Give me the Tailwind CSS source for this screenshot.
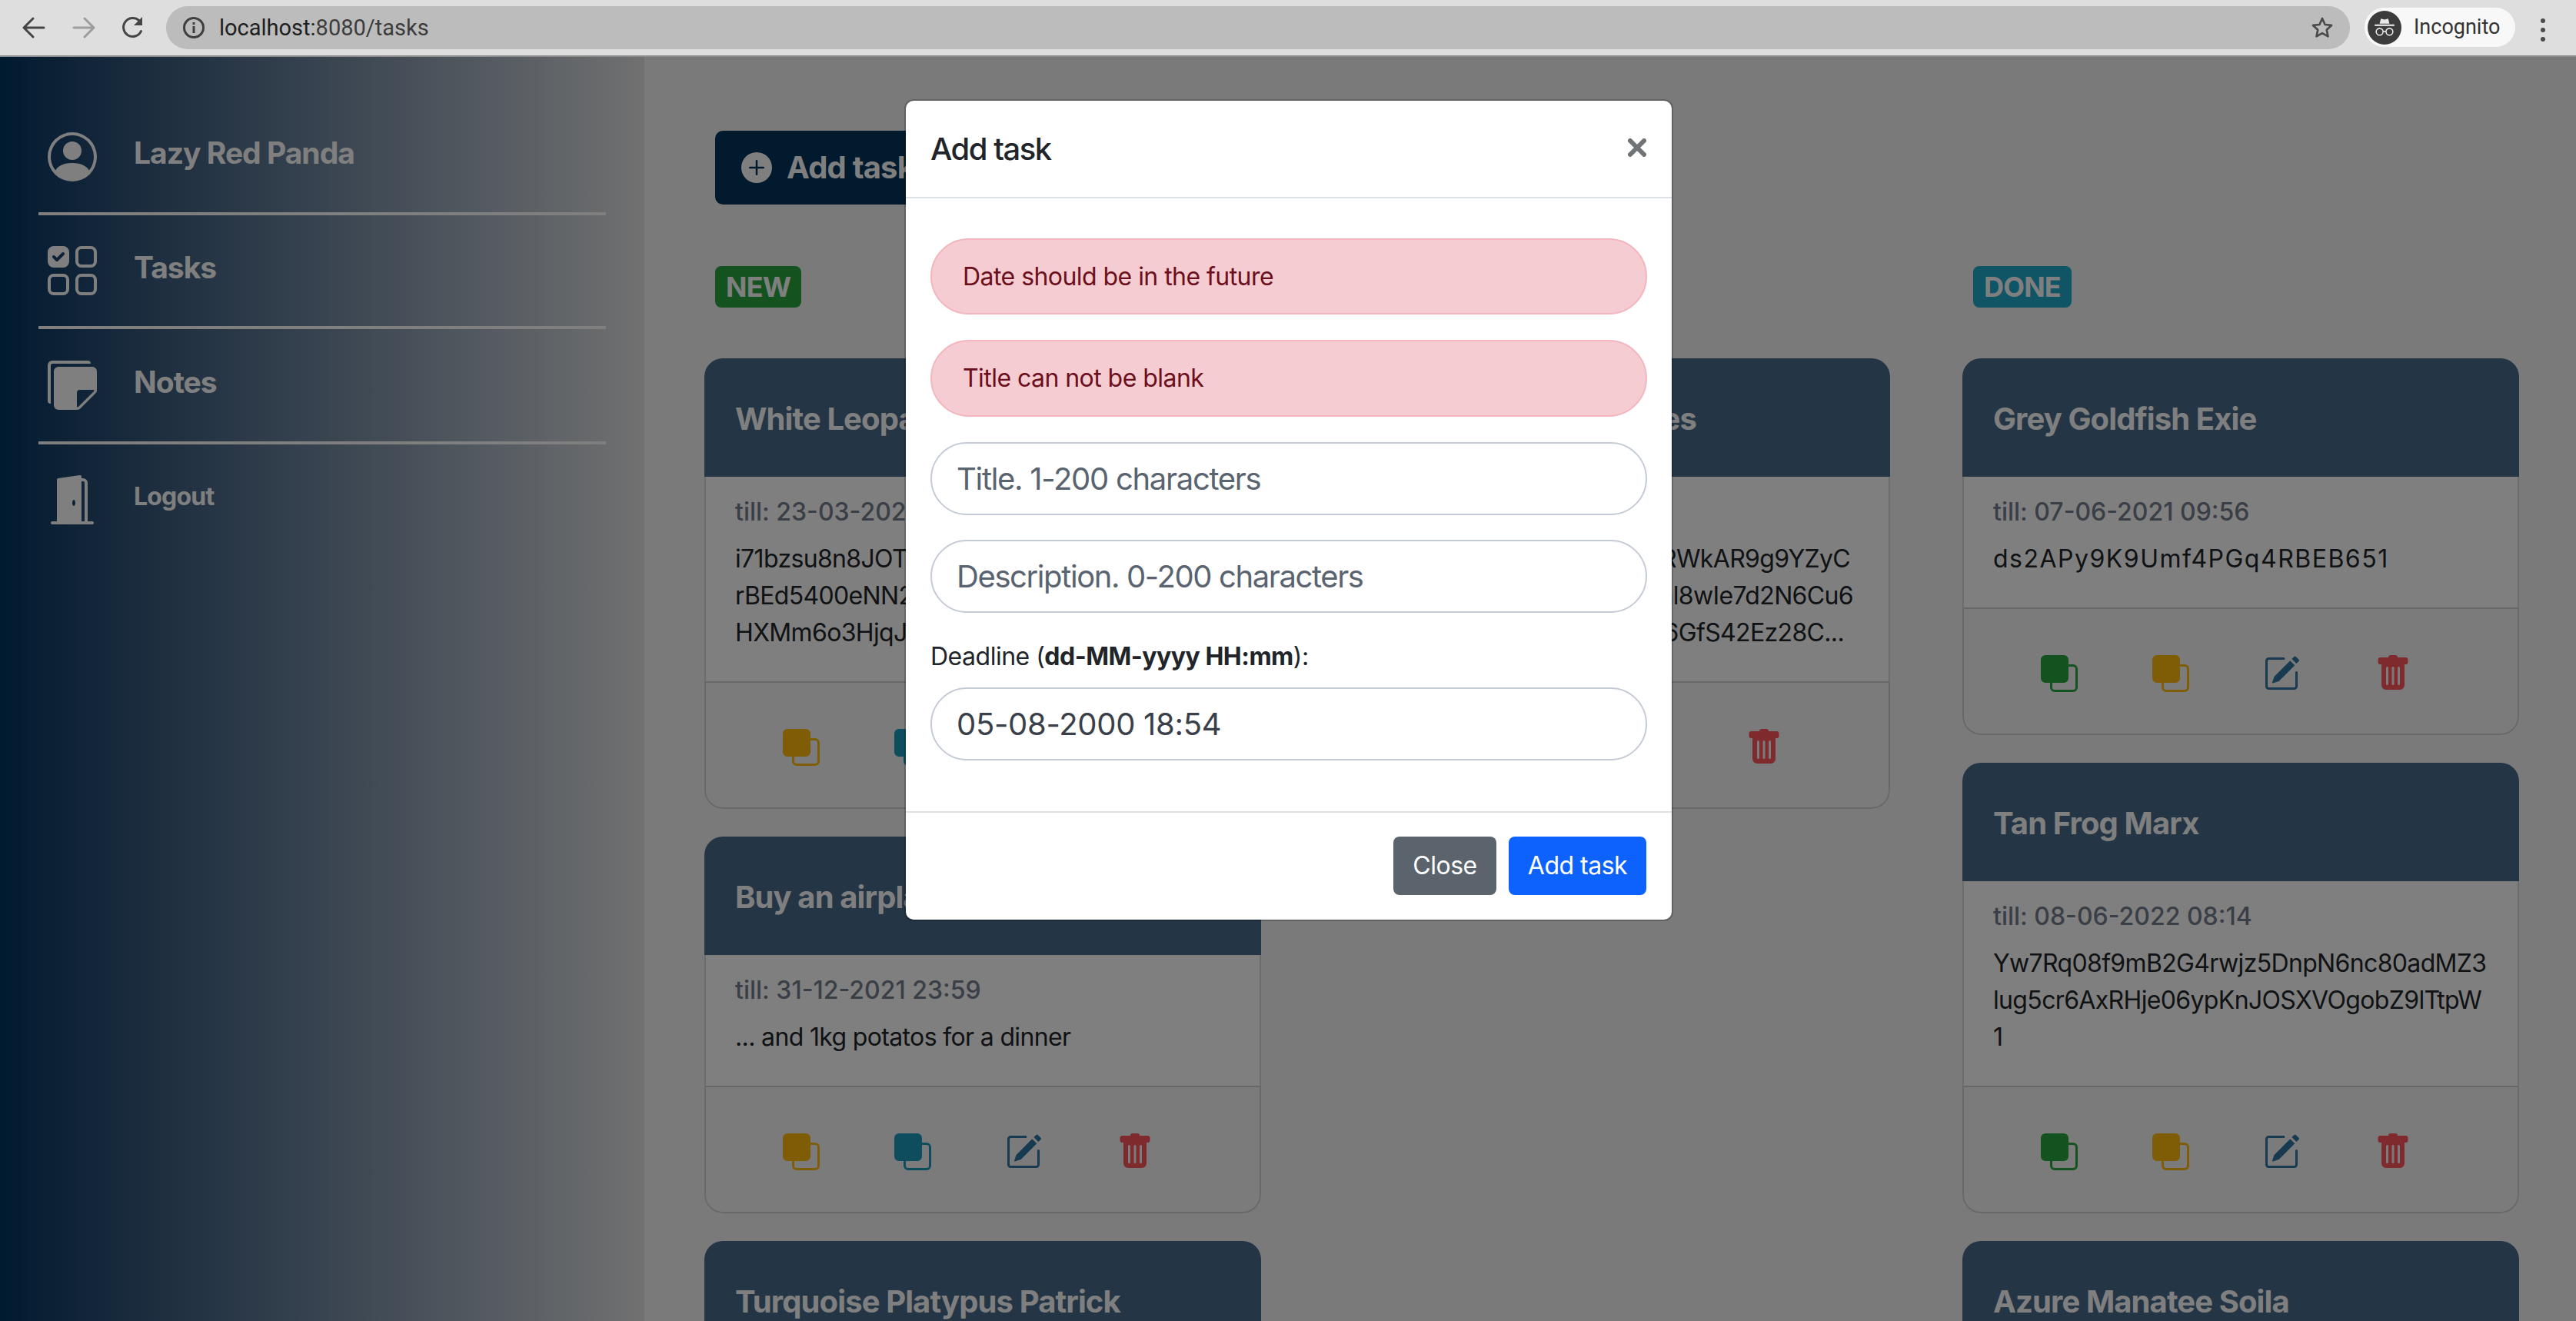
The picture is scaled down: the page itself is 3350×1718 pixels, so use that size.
<!DOCTYPE html>
<html lang="en">
<head>
    <meta charset="UTF-8">
    <title>localhost:8080/tasks</title>
    <script src="https://cdn.jsdelivr.net/npm/@tailwindcss/browser@4"></script>
</head>
<body class="w-[3350px] h-[1718px] overflow-hidden bg-[#f4f4f4] font-['Inter',sans-serif]">
    <!-- browser toolbar -->
    <div class="h-[74px] bg-[#dedede] border-b-2 border-[#8c8c8c] flex items-start font-['Roboto',sans-serif]">
        <div class="w-[216px] h-[72px] flex items-center shrink-0">
            <svg class="ml-[28px] w-[32px] h-[32px] text-[#454545]" viewBox="0 0 32 32" fill="none" stroke="currentColor" stroke-width="3" stroke-linecap="round" stroke-linejoin="round"><path d="M29 16H4M15 4L3 16l12 12"/></svg>
            <svg class="ml-[33px] w-[32px] h-[32px] text-[#9d9d9d]" viewBox="0 0 32 32" fill="none" stroke="currentColor" stroke-width="3" stroke-linecap="round" stroke-linejoin="round"><path d="M3 16h25M17 4l12 12-12 12"/></svg>
            <svg class="ml-[32px] w-[32px] h-[32px] text-[#454545]" viewBox="0 0 32 32" fill="none"><path d="M26.5 20.5A12 12 0 1 1 24.5 7.5" stroke="currentColor" stroke-width="3" stroke-linecap="round"/><path d="M28 2v11H17z" fill="currentColor"/></svg>
        </div>
        <div class="mt-[8px] w-[2840px] h-[56px] rounded-full bg-[#bcbcbc] flex items-center">
            <svg class="ml-[22px] w-[28px] h-[28px] text-[#3f3f3f]" viewBox="0 0 28 28" fill="none"><circle cx="14" cy="14" r="12.5" stroke="currentColor" stroke-width="3"/><rect x="12.5" y="12" width="3" height="9" fill="currentColor"/><rect x="12.5" y="7" width="3" height="3" fill="currentColor"/></svg>
            <span class="ml-[19px] text-[29px] leading-none text-[#202020]">localhost:<span class="text-[#3c3c3c]">8080/tasks</span></span>
            <svg class="ml-auto mr-[20px] w-[32px] h-[32px] text-[#4a4a4a]" viewBox="0 0 24 24" fill="none" stroke="currentColor" stroke-width="2" stroke-linejoin="round"><path d="M12 3l2.7 6 6.3.7-4.7 4.4 1.3 6.4L12 17.3l-5.6 3.2 1.3-6.4L3 9.7 9.3 9z"/></svg>
        </div>
        <div class="ml-[19px] mt-[10px] w-[196px] h-[51px] rounded-full bg-[#f8f8f8] flex items-center">
            <div class="ml-[4px] w-[44px] h-[44px] rounded-full bg-[#3c3c3c] flex items-center justify-center">
                <svg class="w-[34px] h-[34px]" viewBox="0 0 32 32" fill="none"><path d="M10 11l1.5-6 4.5 1.2L20.500 5l1.500 6z" fill="#e8e8e8"/><rect x="4" y="12" width="24" height="2" fill="#e8e8e8"/><circle cx="10" cy="21" r="4.200" stroke="#e8e8e8" stroke-width="1.500"/><circle cx="22" cy="21" r="4.200" stroke="#e8e8e8" stroke-width="1.500"/><path d="M14.200 20.500h3.600" stroke="#e8e8e8" stroke-width="1.500"/></svg>
            </div>
            <span class="ml-[16px] text-[27px] leading-none text-[#333333]">Incognito</span>
        </div>
        <div class="ml-[33px] mt-[24px] flex flex-col gap-[6px]">
            <span class="w-[6px] h-[6px] rounded-full bg-[#4a4a4a]"></span>
            <span class="w-[6px] h-[6px] rounded-full bg-[#4a4a4a]"></span>
            <span class="w-[6px] h-[6px] rounded-full bg-[#4a4a4a]"></span>
        </div>
    </div>

    <div class="relative h-[1644px] overflow-hidden flex">
        <!-- sidebar -->
        <aside class="w-[838px] shrink-0 h-full bg-linear-to-r from-[#003460] to-[#e2e2e2] px-[50px] pt-[58px] text-white">
            <div class="h-[144px] flex items-center pl-[12px] gap-[48px]">
                <svg class="w-[64px] h-[64px]" viewBox="0 0 16 16" fill="currentColor"><path d="M11 6a3 3 0 1 1-6 0 3 3 0 0 1 6 0z"/><path fill-rule="evenodd" d="M0 8a8 8 0 1 1 16 0A8 8 0 0 1 0 8zm8-7a7 7 0 0 0-5.468 11.37C3.242 11.226 4.805 10 8 10s4.757 1.225 5.468 2.37A7 7 0 0 0 8 1z"/></svg>
                <span class="text-[39px] tracking-[-1px] leading-none font-bold -mt-[11px]">Lazy Red Panda</span>
            </div>
            <div class="h-[4px] bg-white"></div>
            <div class="h-[144px] flex items-center pl-[12px] gap-[48px]">
                <svg class="w-[64px] h-[64px]" viewBox="0 0 16 16" fill="currentColor"><path fill-rule="evenodd" d="M2 10h3a1 1 0 0 1 1 1v3a1 1 0 0 1-1 1H2a1 1 0 0 1-1-1v-3a1 1 0 0 1 1-1zm9-9h3a1 1 0 0 1 1 1v3a1 1 0 0 1-1 1h-3a1 1 0 0 1-1-1V2a1 1 0 0 1 1-1zm0 9a1 1 0 0 0-1 1v3a1 1 0 0 0 1 1h3a1 1 0 0 0 1-1v-3a1 1 0 0 0-1-1h-3zm0-10a2 2 0 0 0-2 2v3a2 2 0 0 0 2 2h3a2 2 0 0 0 2-2V2a2 2 0 0 0-2-2h-3zM2 9a2 2 0 0 0-2 2v3a2 2 0 0 0 2 2h3a2 2 0 0 0 2-2v-3a2 2 0 0 0-2-2H2zm7 2a2 2 0 0 1 2-2h3a2 2 0 0 1 2 2v3a2 2 0 0 1-2 2h-3a2 2 0 0 1-2-2v-3zM0 2a2 2 0 0 1 2-2h3a2 2 0 0 1 2 2v3a2 2 0 0 1-2 2H2a2 2 0 0 1-2-2V2zm5.354.854a.5.5 0 1 0-.708-.708L3 3.793l-.646-.647a.5.5 0 1 0-.708.708l1 1a.5.5 0 0 0 .708 0l2-2z"/></svg>
                <span class="text-[39px] tracking-[-1px] leading-none font-bold -mt-[9px]">Tasks</span>
            </div>
            <div class="h-[4px] bg-white"></div>
            <div class="h-[146px] flex items-center pl-[12px] gap-[48px]">
                <svg class="w-[64px] h-[64px]" viewBox="0 0 16 16" fill="currentColor"><path d="M0 1.5V13a1 1 0 0 0 1 1V1.5a.5.5 0 0 1 .5-.5H14a1 1 0 0 0-1-1H1.5A1.5 1.5 0 0 0 0 1.5z"/><path d="M3.5 2A1.5 1.5 0 0 0 2 3.500v11A1.5 1.5 0 0 0 3.5 16h6.086a1.5 1.5 0 0 0 1.06-.44l4.915-4.914A1.5 1.5 0 0 0 16 9.586V3.5A1.5 1.5 0 0 0 14.5 2h-11zm6 8.500a1 1 0 0 1 1-1h4.396a.25.25 0 0 1 .177.427l-5.146 5.146a.25.25 0 0 1-.427-.177V10.5z"/></svg>
                <span class="text-[39px] tracking-[-1px] leading-none font-bold -mt-[10px]">Notes</span>
            </div>
            <div class="h-[4px] bg-white"></div>
            <div class="h-[144px] flex items-center pl-[12px] gap-[48px]">
                <svg class="w-[64px] h-[64px]" viewBox="0 0 16 16" fill="currentColor"><path d="M1.5 15a.5.5 0 0 0 0 1h13a.5.5 0 0 0 0-1H13V2.5A1.5 1.5 0 0 0 11.5 1H11V.5a.5.5 0 0 0-.57-.495l-7 1A.5.5 0 0 0 3 1.5V15H1.5zM11 2h.5a.5.5 0 0 1 .5.5V15h-1V2zm-2.5 8c-.276 0-.5-.448-.5-1s.224-1 .5-1 .5.448.5 1-.224 1-.5 1z"/></svg>
                <span class="text-[32px] tracking-[-0.8px] leading-none font-bold -mt-[8px]">Logout</span>
            </div>
        </aside>

        <!-- board -->
        <main class="flex-1 pl-[78px]">
            <button class="ml-[14px] mt-[96px] h-[96px] w-[400px] rounded-[10px] bg-[#04345c] text-white flex items-center pl-[34px] gap-[19px] text-[40px] tracking-[-0.8px] font-bold">
                <svg class="w-[40px] h-[40px]" viewBox="0 0 16 16" fill="currentColor"><path d="M16 8A8 8 0 1 1 0 8a8 8 0 0 1 16 0zM8.500 4.500a.5.5 0 0 0-1 0v3h-3a.5.5 0 0 0 0 1h3v3a.5.5 0 0 0 1 0v-3h3a.5.5 0 0 0 0-1h-3v-3z"/></svg>
                Add task
            </button>
            <div id="board" class="mt-[80px] grid grid-cols-[724px_724px_724px] gap-x-[94px]"></div>
        </main>

        <!-- backdrop -->
        <div class="absolute inset-0 bg-black/50"></div>

        <!-- modal -->
        <div class="absolute left-[1176px] top-[55px] w-[1000px] h-[1069px] bg-white rounded-[12px] border-2 border-black/20 bg-clip-padding text-[#212529]">
            <div class="h-[127px] border-b-2 border-[#dee2e6] flex items-center justify-between px-[32px]">
                <h5 class="text-[40px] tracking-[-1.5px] font-medium leading-none">Add task</h5>
                <svg class="w-[24px] h-[24px] mr-[1px] -mt-[4px] text-[#6f7276]" viewBox="0 0 24 24" fill="none" stroke="currentColor" stroke-width="6" stroke-linecap="round"><path d="M3 3l18 18M21 3L3 21"/></svg>
            </div>
            <div class="px-[32px] pt-[52px] pb-[66px]">
                <div class="h-[99px] mb-[33px] rounded-[50px] border-2 border-[#f3b6be] bg-[#f5ccd1] text-[#6c0f1c] text-[32px] tracking-[-0.55px] flex items-center pl-[40px]">Date should be in the future</div>
                <div class="h-[100px] mb-[33px] rounded-[50px] border-2 border-[#f3b6be] bg-[#f5ccd1] text-[#6c0f1c] text-[32px] tracking-[-0.55px] flex items-center pl-[40px]">Title can not be blank</div>
                <input type="text" placeholder="Title. 1-200 characters" class="block w-full h-[95px] mb-[32px] rounded-[50px] border-2 border-[#c5cbd6] px-[32px] text-[40px] tracking-[-1.3px] text-[#3a404a] placeholder:text-[#5a6370]">
                <input type="text" placeholder="Description. 0-200 characters" class="block w-full h-[95px] rounded-[50px] border-2 border-[#c5cbd6] px-[32px] text-[40px] tracking-[-1.4px] text-[#3a404a] placeholder:text-[#5a6370]">
                <label class="block pt-[33px] pb-[16px] text-[32px] tracking-[-0.5px] leading-[48px]">Deadline (<b class="font-bold">dd-MM-yyyy HH:mm</b>):</label>
                <input type="text" value="05-08-2000 18:54" class="block w-full h-[95px] rounded-[50px] border-2 border-[#c5cbd6] px-[32px] text-[40px] tracking-[-0.3px] text-[#3a404a]">
            </div>
            <div class="h-[139px] border-t-2 border-[#dee2e6] flex justify-end items-start pt-[31px] pr-[33px] gap-[16px] text-[32px] tracking-[-0.5px] text-white">
                <button class="w-[134px] h-[76px] rounded-[8px] bg-[#5b636d]">Close</button>
                <button class="w-[179px] h-[76px] rounded-[8px] bg-[#0d62fe]">Add task</button>
            </div>
        </div>
    </div>

    <script>
        const front = 'M0 2a2 2 0 0 1 2-2h8a2 2 0 0 1 2 2v2h2a2 2 0 0 1 2 2v8a2 2 0 0 1-2 2H6a2 2 0 0 1-2-2v-2H2a2 2 0 0 1-2-2V2zm5 10v2a1 1 0 0 0 1 1h8a1 1 0 0 0 1-1V6a1 1 0 0 0-1-1h-2v5a2 2 0 0 1-2 2H5z';
        const icons = {
            green: `<path fill-rule="evenodd" d="${front}"/>`,
            yellow: `<path fill-rule="evenodd" d="${front}"/>`,
            teal: `<path fill-rule="evenodd" d="${front}"/>`,
            edit: '<path d="M15.502 1.94a.5.5 0 0 1 0 .706L14.459 3.69l-2-2L13.502.646a.5.5 0 0 1 .707 0l1.293 1.293zm-1.75 2.456-2-2L4.939 9.21a.5.5 0 0 0-.121.196l-.805 2.414a.25.25 0 0 0 .316.316l2.414-.805a.5.5 0 0 0 .196-.12l6.813-6.814z"/><path fill-rule="evenodd" d="M1 13.5A1.5 1.5 0 0 0 2.5 15h11a1.5 1.5 0 0 0 1.5-1.5v-6a.5.5 0 0 0-1 0v6a.5.5 0 0 1-.5.5h-11a.5.5 0 0 1-.5-.5v-11a.5.5 0 0 1 .5-.5H9a.5.5 0 0 0 0-1H2.5A1.5 1.5 0 0 0 1 2.5v11z"/>',
            trash: '<path d="M2.5 1a1 1 0 0 0-1 1v1a1 1 0 0 0 1 1H3v9a2 2 0 0 0 2 2h6a2 2 0 0 0 2-2V4h.5a1 1 0 0 0 1-1V2a1 1 0 0 0-1-1H10a1 1 0 0 0-1-1H7a1 1 0 0 0-1 1H2.5zm3 4a.5.5 0 0 1 .5.5v7a.5.5 0 0 1-1 0v-7a.5.5 0 0 1 .5-.5zM8 5a.5.5 0 0 1 .5.5v7a.5.5 0 0 1-1 0v-7A.5.5 0 0 1 8 5zm3 .5v7a.5.5 0 0 1-1 0v-7a.5.5 0 0 1 1 0z"/>'
        };
        const iconColors = {
            green: 'text-[#28a440]',
            yellow: 'text-[#ffba0c]',
            teal: 'text-[#1c9abc]',
            edit: 'text-[#2e74a0]',
            trash: 'text-[#fe545a]'
        };

        const columns = [
            {
                label: 'NEW', badge: 'bg-[#28a440]',
                cards: [
                    { title: 'White Leopard Plato', till: '23-03-2021 11:20', lines: ['i71bzsu8n8JOTg2kLw0pQeVx7Zm', 'rBEd5400eNN2cYh3sTu9aFj6Wq1', 'HXMm6o3HjqJvR8dKy5bPn4GtC...'], actions: ['yellow', 'teal', 'edit', 'trash'] },
                    { title: 'Buy an airplane ticket to Paris', till: '31-12-2021 23:59', lines: ['... and 1kg potatos for a dinner'], actions: ['yellow', 'teal', 'edit', 'trash'] },
                    { title: 'Turquoise Platypus Patrick', till: '14-02-2022 10:30', lines: ['Xb3'], actions: ['yellow', 'teal', 'edit', 'trash'] }
                ]
            },
            {
                label: 'IN PROGRESS', badge: 'bg-[#ffba0c]',
                cards: [
                    { title: 'Green Lemur Socrates', till: '17-09-2021 15:05', lines: ['n0tYRWkAR9g9YZyC', 'qxal8wIe7d2N6Cu6', 'Mb6GfS42Ez28C...'], pads: ['pr-[12px]', 'pr-[8px]', 'pr-[20px]'], actions: ['green', 'teal', 'edit', 'trash'] }
                ]
            },
            {
                label: 'DONE', badge: 'bg-[#1faacc]',
                cards: [
                    { title: 'Grey Goldfish Exie', till: '07-06-2021 09:56', lines: ['ds2APy9K9Umf4PGq4RBEB651'], wide: 'tracking-[1.5px]', actions: ['green', 'yellow', 'edit', 'trash'] },
                    { title: 'Tan Frog Marx', till: '08-06-2022 08:14', lines: ['Yw7Rq08f9mB2G4rwjz5DnpN6nc80adMZ3lug5cr6AxRHje06ypKnJOSXVOgobZ9lTtpW1'], actions: ['green', 'yellow', 'edit', 'trash'] },
                    { title: 'Azure Manatee Soila', till: '02-11-2021 12:40', lines: ['Qp8'], actions: ['green', 'yellow', 'edit', 'trash'] }
                ]
            }
        ];

        const board = document.getElementById('board');
        columns.forEach(col => {
            const cards = col.cards.map(card => `
                <div class="mb-[36px] bg-white rounded-[24px] overflow-hidden">
                    <div class="h-[154px] bg-[#486a8a] text-white flex items-center pl-[40px] pt-[4px] text-[40px] tracking-[-0.9px] font-bold whitespace-nowrap ${card.pads ? 'justify-end pr-[252px]' : ''}">${card.title}</div>
                    <div class="border-x-2 border-black/15 px-[38px] pt-[22px] pb-[39px] text-[32px] tracking-[-0.65px] leading-[48px] text-[#212529]">
                        <div class="mb-[13px] font-medium tracking-normal text-[#747c8c] ${card.pads ? 'invisible' : ''}">till: ${card.till}</div>
                        ${card.lines.map((line, i) => `<div class="${card.pads ? 'text-right whitespace-nowrap ' + card.pads[i] : 'break-all'} ${card.wide || ''}">${line}</div>`).join('')}
                    </div>
                    <div class="h-[166px] border-x-2 border-b-2 border-t-2 border-black/15 rounded-b-[24px] bg-[#f6f6f6] flex items-start pl-[100px] pt-[60px] gap-[96.5px]">
                        ${card.actions.map(a => `<svg class="w-[48px] h-[48px] ${iconColors[a]}" viewBox="0 0 16 16" fill="currentColor">${icons[a]}</svg>`).join('')}
                    </div>
                </div>`).join('');
            board.insertAdjacentHTML('beforeend', `
                <section>
                    <span class="ml-[14px] mb-[66px] flex w-fit h-[54px] items-center px-[14px] rounded-[8px] text-white text-[36px] tracking-[-0.8px] font-bold leading-none ${col.badge}">${col.label}</span>
                    ${cards}
                </section>`);
        });
    </script>
</body>
</html>
